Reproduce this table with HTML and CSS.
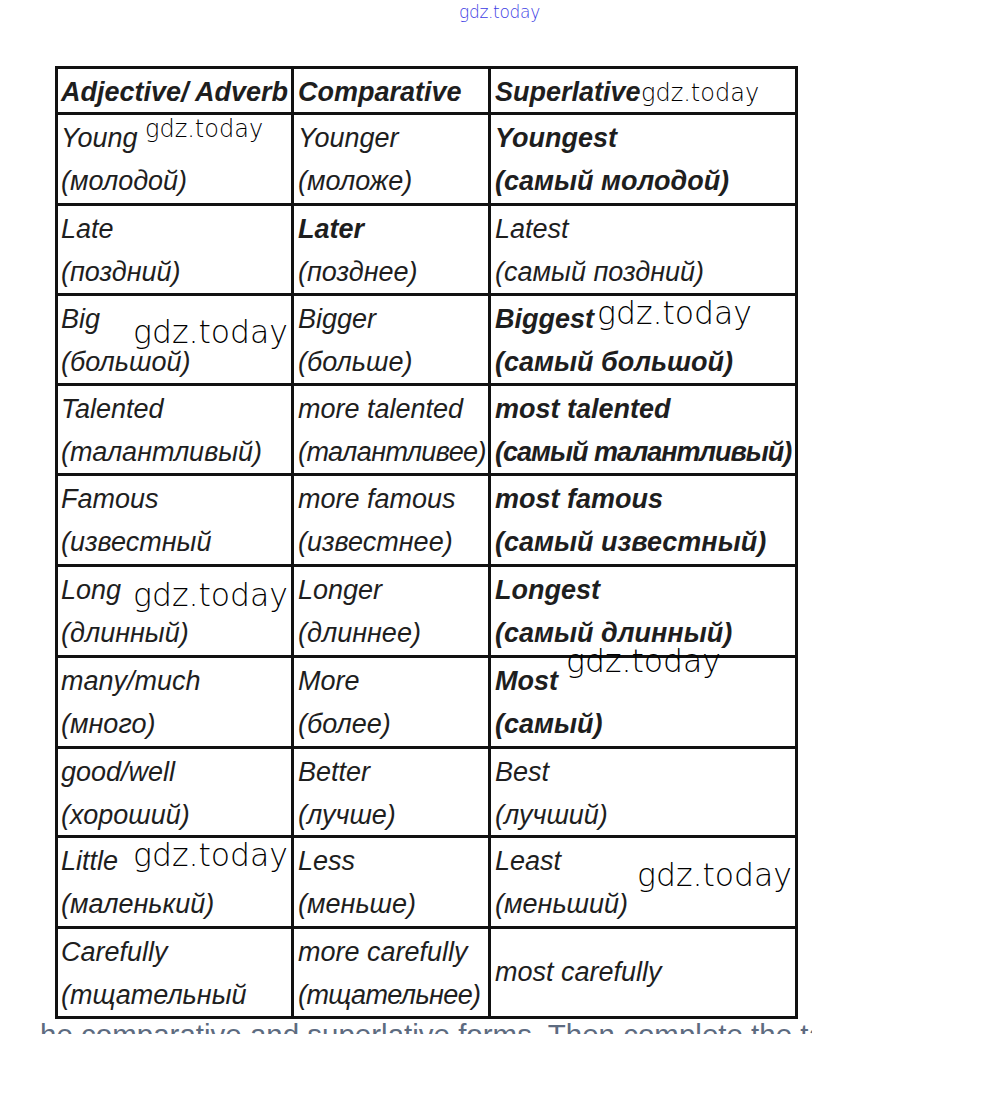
FILE: index.html
```html
<!DOCTYPE html>
<html lang="ru">
<head>
<meta charset="utf-8">
<title>Adjectives and adverbs</title>
<link rel="stylesheet" href="styles.css">
</head>
<body>
<div class="page">
  <div class="grid">
    <div class="cell b">Adjective/ Adverb</div>
    <div class="cell b">Comparative</div>
    <div class="cell b">Superlative</div>

    <div class="cell">Young<br>(молодой)</div>
    <div class="cell">Younger<br>(моложе)</div>
    <div class="cell b">Youngest<br>(самый молодой)</div>

    <div class="cell">Late<br>(поздний)</div>
    <div class="cell"><b>Later</b><br>(позднее)</div>
    <div class="cell">Latest<br>(самый поздний)</div>

    <div class="cell">Big<br>(большой)</div>
    <div class="cell">Bigger<br>(больше)</div>
    <div class="cell b">Biggest<br>(самый большой)</div>

    <div class="cell">Talented<br>(талантливый)</div>
    <div class="cell">more talented<br><span class="tight">(талантливее)</span></div>
    <div class="cell b">most talented<br><span class="tighter">(самый талантливый)</span></div>

    <div class="cell">Famous<br>(известный</div>
    <div class="cell">more famous<br>(известнее)</div>
    <div class="cell b">most famous<br>(самый известный)</div>

    <div class="cell">Long<br>(длинный)</div>
    <div class="cell">Longer<br>(длиннее)</div>
    <div class="cell b">Longest<br>(самый длинный)</div>

    <div class="cell">many/much<br>(много)</div>
    <div class="cell">More<br>(более)</div>
    <div class="cell b">Most<br>(самый)</div>

    <div class="cell">good/well<br>(хороший)</div>
    <div class="cell">Better<br>(лучше)</div>
    <div class="cell">Best<br>(лучший)</div>

    <div class="cell">Little<br>(маленький)</div>
    <div class="cell">Less<br>(меньше)</div>
    <div class="cell">Least<br>(меньший)</div>

    <div class="cell">Carefully<br>(тщательный</div>
    <div class="cell">more carefully<br><span class="tight">(тщательнее)</span></div>
    <div class="cell mid">most carefully</div>
  </div>

  <div class="cut"><p>he comparative and superlative forms. Then complete the table</p></div>

  <span class="wm wm-top">gdz.today</span>
  <span class="wm wm-s wm-head">gdz.today</span>
  <span class="wm wm-s wm-young">gdz.today</span>
  <span class="wm wm-l wm-big">gdz.today</span>
  <span class="wm wm-l wm-biggest">gdz.today</span>
  <span class="wm wm-l wm-long">gdz.today</span>
  <span class="wm wm-l wm-most">gdz.today</span>
  <span class="wm wm-l wm-little">gdz.today</span>
  <span class="wm wm-l wm-least">gdz.today</span>
</div>
</body>
</html>
```

FILE: styles.css
```css
html, body {
  margin: 0;
  padding: 0;
  background: #ffffff;
}

.page {
  position: relative;
  width: 1000px;
  height: 1101px;
  overflow: hidden;
  padding-top: 66px;
  box-sizing: border-box;
}

.grid {
  margin-left: 55px;
  width: 743px;
  display: grid;
  grid-template-columns: 236px 197px 307px;
  grid-template-rows: 46px 91px 90px 90px 90px 91px 91px 91px 89px 91px 90px;
  border-top: 3px solid #111;
  border-left: 3px solid #111;
  box-sizing: border-box;
  font-family: "Liberation Sans", Arial, sans-serif;
  font-style: italic;
  font-size: 27px;
  color: #1e1e1e;
}

.cell {
  border-right: 3px solid #111;
  border-bottom: 3px solid #111;
  padding: 2px 0 0 4px;
  line-height: 43px;
  white-space: nowrap;
}

.grid > .cell:nth-child(3n+1) {
  padding-left: 3px;
}

.b {
  font-weight: bold;
}

.tight {
  letter-spacing: -0.6px;
}

.tighter {
  letter-spacing: -1px;
}

.mid {
  display: flex;
  align-items: center;
  padding-top: 0;
}

.cut {
  margin-top: 1px;
  margin-left: 40px;
  width: 772px;
  height: 14px;
  overflow: hidden;
}

.cut p {
  margin: 0;
  white-space: nowrap;
  font-family: "Liberation Sans", Arial, sans-serif;
  font-size: 29.5px;
  line-height: 30px;
  color: #5d6b80;
}

.wm {
  position: absolute;
  font-family: "DejaVu Sans", sans-serif;
  font-weight: 200;
  line-height: 1;
  color: #000;
  white-space: nowrap;
}

.wm-top {
  left: 459px;
  top: 4px;
  font-size: 17px;
  color: #3c3ce4;
  letter-spacing: -0.3px;
}

.wm-s {
  font-size: 24px;
}

.wm-l {
  font-size: 31.5px;
}

.wm-head { left: 641px; top: 81px; }
.wm-young { left: 145px; top: 117px; }
.wm-big { left: 133px; top: 317px; }
.wm-biggest { left: 597px; top: 298px; }
.wm-long { left: 133px; top: 580px; }
.wm-most { left: 566px; top: 646px; }
.wm-little { left: 133px; top: 840px; }
.wm-least { left: 637px; top: 860px; }
```
